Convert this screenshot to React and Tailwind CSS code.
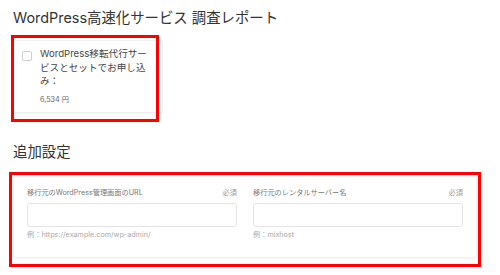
import React from 'react';

const font = { fontFamily: '"Inter", "Noto Sans CJK JP", sans-serif' };

function Field({ label, hint }) {
  return (
    <div className="flex flex-col">
      <div className="flex justify-between items-center text-[7.2px] leading-[11px] text-[#777]">
        <span>{label}</span>
        <span className="text-[#9a9a9a]">必須</span>
      </div>
      <input
        type="text"
        className="mt-[5px] h-[24px] w-full border border-[#e4e4e4] rounded-[3px] bg-white outline-none"
      />
      <p className="mt-[2px] text-[7.2px] leading-[11px] text-[#a8a8a8]">{hint}</p>
    </div>
  );
}

export default function App() {
  return (
    <div className="w-[500px] h-[275px] bg-white px-[13px] pt-[8px] text-[#333]" style={font}>
      <h1 className="text-[14.4px] leading-[20px] text-[#333]">WordPress高速化サービス 調査レポート</h1>

      {/* plan option */}
      <div className="relative mt-[12px] w-[150px]">
        <div className="flex gap-[8px] bg-white border border-[#f0f0f0] rounded-[3px] shadow-[0_1px_3px_rgba(0,0,0,0.05)] pl-[8px] pt-[6px] pb-[6px]">
          <span className="mt-[4px] w-[10px] h-[10px] shrink-0 rounded-[2px] border border-[#cfcfcf] bg-white" />
          <div className="w-[110px]">
            <p className="text-[9.6px] leading-[13.5px] text-[#444]">WordPress移転代行サービスとセットでお申し込み：</p>
            <p className="mt-[6px] text-[7.2px] leading-[12px] text-[#666]">6,534 円</p>
          </div>
        </div>
        <div className="absolute left-[-2px] top-[-5px] w-[148px] h-[87px] border-[3px] border-[#ff0000]" />
      </div>

      <h2 className="mt-[29px] text-[14.4px] leading-[20px] text-[#333]">追加設定</h2>

      {/* additional settings */}
      <div className="relative mt-[13px] w-[464px]">
        <div className="grid grid-cols-2 gap-[16px] bg-white border border-[#efefef] rounded-[3px] shadow-[0_1px_3px_rgba(0,0,0,0.05)] px-[13px] pt-[11px] pb-[17px]">
          <Field label="移行元のWordPress管理画面のURL" hint="例：https://example.com/wp-admin/" />
          <Field label="移行元のレンタルサーバー名" hint="例：mixhost" />
        </div>
        <div className="absolute left-[-4px] top-[-3px] w-[472px] h-[95px] border-[3px] border-[#ff0000]" />
      </div>
    </div>
  );
}
